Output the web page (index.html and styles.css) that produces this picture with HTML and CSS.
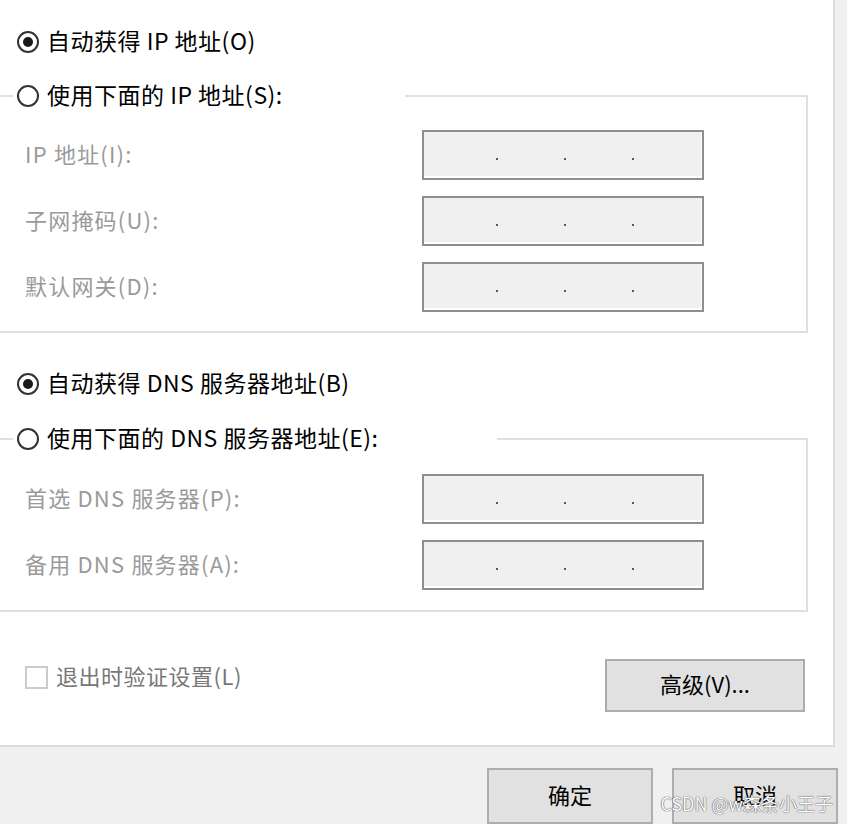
FILE: index.html
```html
<!DOCTYPE html>
<html lang="zh-CN">

<head>
  <meta charset="UTF-8">
  <meta name="viewport" content="width=device-width, initial-scale=1.0">
  <title>Internet 协议版本 4 (TCP/IPv4) 属性</title>
  <link rel="stylesheet" href="styles.css">
</head>

<body>
  <div class="panel">
    <!-- IP address -->
    <label class="radio-row"><input type="radio" name="ip" checked><span>自动获得 IP 地址(O)</span></label>

    <fieldset class="group">
      <legend class="legend-ip">
        <label class="radio-row"><input type="radio" name="ip"><span>使用下面的 IP 地址(S):</span></label>
      </legend>
      <div class="fields">
        <span class="field-label">IP 地址(I):</span>
        <div class="ip-box"><span class="dot"></span><span class="dot"></span><span class="dot"></span></div>

        <span class="field-label">子网掩码(U):</span>
        <div class="ip-box"><span class="dot"></span><span class="dot"></span><span class="dot"></span></div>

        <span class="field-label">默认网关(D):</span>
        <div class="ip-box"><span class="dot"></span><span class="dot"></span><span class="dot"></span></div>
      </div>
    </fieldset>

    <!-- DNS -->
    <label class="radio-row dns-auto"><input type="radio" name="dns" checked><span>自动获得 DNS 服务器地址(B)</span></label>

    <fieldset class="group group-dns">
      <legend class="legend-dns">
        <label class="radio-row"><input type="radio" name="dns"><span>使用下面的 DNS 服务器地址(E):</span></label>
      </legend>
      <div class="fields">
        <span class="field-label">首选 DNS 服务器(P):</span>
        <div class="ip-box"><span class="dot"></span><span class="dot"></span><span class="dot"></span></div>

        <span class="field-label">备用 DNS 服务器(A):</span>
        <div class="ip-box"><span class="dot"></span><span class="dot"></span><span class="dot"></span></div>
      </div>
    </fieldset>

    <!-- Validate + advanced -->
    <div class="options">
      <label class="check-row"><input type="checkbox" disabled><span>退出时验证设置(L)</span></label>
      <button class="btn-advanced">高级(V)...</button>
    </div>
  </div>

  <div class="footer">
    <button class="btn">确定</button>
    <button class="btn">取消</button>
    <span class="watermark">CSDN @w森条小王子</span>
  </div>
</body>

</html>
```

FILE: styles.css
```css
body {
  margin: 0;
  background-color: #f0f0f0;
  font-family: "Noto Sans CJK SC", "Noto Sans", sans-serif;
  color: #000000;
  overflow: hidden;
}

/* White property page */
.panel {
  width: 833px;
  padding: 27px 0 33px 0;
  background-color: #ffffff;
  border-right: 2px solid #dcdcdc;
  border-bottom: 2px solid #dcdcdc;
}

.radio-row {
  display: flex;
  align-items: center;
  gap: 8px;
  height: 30px;
  padding-left: 17px;
  font-size: 23px;
  letter-spacing: 0.5px;
  white-space: nowrap;
}

.radio-row span {
  margin-bottom: 5px;
}

.radio-row input {
  appearance: none;
  margin: 0;
  width: 22px;
  height: 22px;
  border: 2px solid #333333;
  border-radius: 50%;
  background-color: #ffffff;
  display: flex;
  align-items: center;
  justify-content: center;
  flex-shrink: 0;
}

.radio-row input:checked::before {
  content: "";
  width: 10px;
  height: 10px;
  border-radius: 50%;
  background-color: #1a1a1a;
}

.dns-auto {
  margin-top: 36px;
}

/* Group boxes */
.group {
  margin: 24px 0 0 -10px;
  width: 814px;
  padding: 0;
  border: 2px solid #dfdfdf;
}

.group-dns {
  margin-top: 25px;
}

.group legend {
  margin-left: 21px;
  padding: 0 4px;
  box-sizing: border-box;
}

.legend-ip {
  width: 392px;
}

.legend-dns {
  width: 484px;
}

.group legend .radio-row {
  padding-left: 0;
}

.fields {
  display: grid;
  grid-template-columns: 397px 282px;
  grid-auto-rows: 50px;
  row-gap: 16px;
  align-items: center;
  padding: 19px 0 19px 33px;
}

.group-dns .fields {
  padding-top: 20px;
  padding-bottom: 20px;
}

.field-label {
  font-size: 22px;
  letter-spacing: 1.2px;
  color: #9a9a9a;
  white-space: nowrap;
  margin-bottom: 4px;
}

.ip-box {
  box-sizing: border-box;
  height: 50px;
  border: 2px solid #8e8e8e;
  background-color: #f0f0f0;
  box-shadow: inset 0 -2px 0 #ffffff, inset -1px 0 0 #ffffff;
  display: flex;
  align-items: center;
  gap: 66px;
  padding: 8px 0 0 72px;
}

.dot {
  width: 2px;
  height: 2px;
  background-color: #555a66;
}

/* Bottom of the page */
.options {
  display: flex;
  justify-content: space-between;
  align-items: flex-start;
  margin-top: 47px;
  padding: 0 28px 0 25px;
}

.check-row {
  display: flex;
  align-items: center;
  gap: 8px;
  height: 30px;
  margin-top: 3px;
  font-size: 22px;
  letter-spacing: 0.5px;
  color: #777777;
}

.check-row span {
  margin-bottom: 5px;
}

.check-row input {
  appearance: none;
  margin: 0;
  width: 23px;
  height: 23px;
  border: 2px solid #cccccc;
  background-color: #ffffff;
}

.btn-advanced,
.btn {
  font-family: inherit;
  font-size: 22px;
  color: #000000;
  background-color: #e1e1e1;
  border: 2px solid #adadad;
  padding: 0 0 5px 0;
}

.btn-advanced {
  width: 200px;
  height: 53px;
}

.footer {
  position: relative;
  display: flex;
  justify-content: flex-end;
  gap: 19px;
  padding: 21px 9px 0 0;
}

.btn {
  width: 166px;
  height: 56px;
}

.watermark {
  position: absolute;
  right: 14px;
  bottom: 8px;
  font-size: 18px;
  color: #ffffff;
  text-shadow: 0 0 1px #444444, 0 0 1px #444444;
  white-space: nowrap;
}
```
